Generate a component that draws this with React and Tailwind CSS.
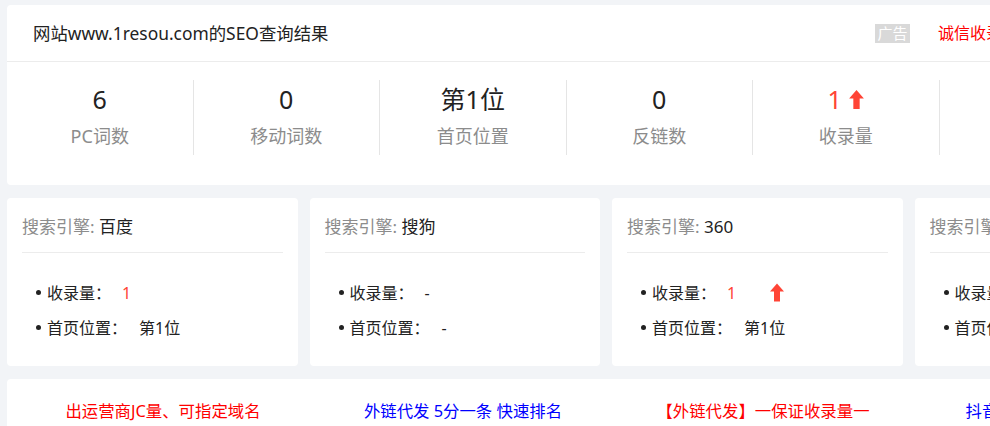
import React from "react";

const font = { fontFamily: '"Noto Sans", "Noto Sans CJK SC", sans-serif' };

function Arrow({ className = "" }) {
  return (
    <svg viewBox="0 0 14 18" className={className} aria-hidden="true">
      <polygon points="7,0 14,8 10,8 10,18 4,18 4,8 0,8" fill="#ff4436" />
    </svg>
  );
}

const stats = [
  { v: "6", l: "PC词数" },
  { v: "0", l: "移动词数" },
  { v: "第1位", l: "首页位置" },
  { v: "0", l: "反链数" },
  { v: "1", l: "收录量", up: true },
  { v: "0", l: "外链数" },
];

const engines = [
  { n: "百度", a: "1", p: "第1位" },
  { n: "搜狗", a: "-", p: "-" },
  { n: "360", a: "1", p: "第1位", up: true },
  { n: "神马", a: "-", p: "-" },
];

const links = [
  { t: "出运营商JC量、可指定域名", c: "text-[#ff0000]" },
  { t: "外链代发 5分一条 快速排名", c: "text-[#0000ff]" },
  { t: "【外链代发】一保证收录量一", c: "text-[#ff0000]" },
  { t: "抖音SEO短视频快速上排名", c: "text-[#0000ff]" },
];

export default function App() {
  return (
    <div className="w-[990px] h-[426px] overflow-hidden bg-[#f2f4f7]" style={font}>
      <div className="w-[1220px] pl-[7px] pt-[5px]">
        {/* top card */}
        <div className="w-[1200px] bg-white rounded-[4px]">
          <div className="h-[57px] flex items-center border-b border-[#ececec]">
            <div className="w-[868px] pl-[26px] text-[17.4px] leading-[24px] text-[#222]">
              网站www.1resou.com的SEO查询结果
            </div>
            <span className="h-[19px] w-[35px] flex items-center justify-center bg-[#d9d9d9] text-white text-[15px] leading-[19px]">
              广告
            </span>
            <span className="ml-[28px] text-[16px] leading-[24px] text-[#ff0000]">诚信收录 快速提升收录量</span>
          </div>
          <div className="flex h-[123px] items-start pt-[18px]">
            {stats.map((s, i) => (
              <div
                key={i}
                className="w-[186.5px] h-[75px] border-r border-[#e5e5e5] flex flex-col items-center"
              >
                <div
                  className={`mt-[4px] h-[30px] flex items-center gap-[7px] text-[25px] leading-[30px] ${
                    s.up ? "text-[#ff4436]" : "text-[#222]"
                  }`}
                >
                  <span>{s.v}</span>
                  {s.up && <Arrow className="w-[15px] h-[19px]" />}
                </div>
                <div className="mt-[10px] text-[18px] leading-[24px] text-[#8c8c8c]">{s.l}</div>
              </div>
            ))}
          </div>
        </div>

        {/* engine cards */}
        <div className="mt-[13px] flex gap-[12px]">
          {engines.map((e, i) => (
            <div key={i} className="w-[290.5px] h-[168px] shrink-0 bg-white rounded-[4px] px-[15px]">
              <div className="pt-[17px] pb-[13px] border-b border-[#ececec] text-[17px] leading-[24px]">
                <span className="text-[#8c8c8c]">搜索引擎: </span>
                <span className="text-[#222]">{e.n}</span>
              </div>
              <ul className="pt-[22px] text-[16px] text-[#222]">
                <li className="h-[35px] flex items-center pl-[14px]">
                  <span className="w-[5px] h-[5px] rounded-full bg-[#222] mr-[6px]" />
                  <span>收录量：</span>
                  <span
                    className={`ml-[11px] w-[43px] ${e.a === "-" ? "text-[#222]" : "text-[#ff4436]"}`}
                  >
                    {e.a}
                  </span>
                  {e.up && <Arrow className="w-[14px] h-[19px]" />}
                </li>
                <li className="h-[35px] flex items-center pl-[14px]">
                  <span className="w-[5px] h-[5px] rounded-full bg-[#222] mr-[6px]" />
                  <span>首页位置：</span>
                  <span className="ml-[12px]">{e.p}</span>
                </li>
              </ul>
            </div>
          ))}
        </div>

        {/* bottom links */}
        <div className="mt-[13px] w-[1200px] h-[80px] bg-white rounded-[4px] flex pl-[6px] pt-[20px]">
          {links.map((l, i) => (
            <div key={i} className={`w-[300px] shrink-0 text-center text-[16.4px] leading-[24px] ${l.c}`}>
              {l.t}
            </div>
          ))}
        </div>
      </div>
    </div>
  );
}
